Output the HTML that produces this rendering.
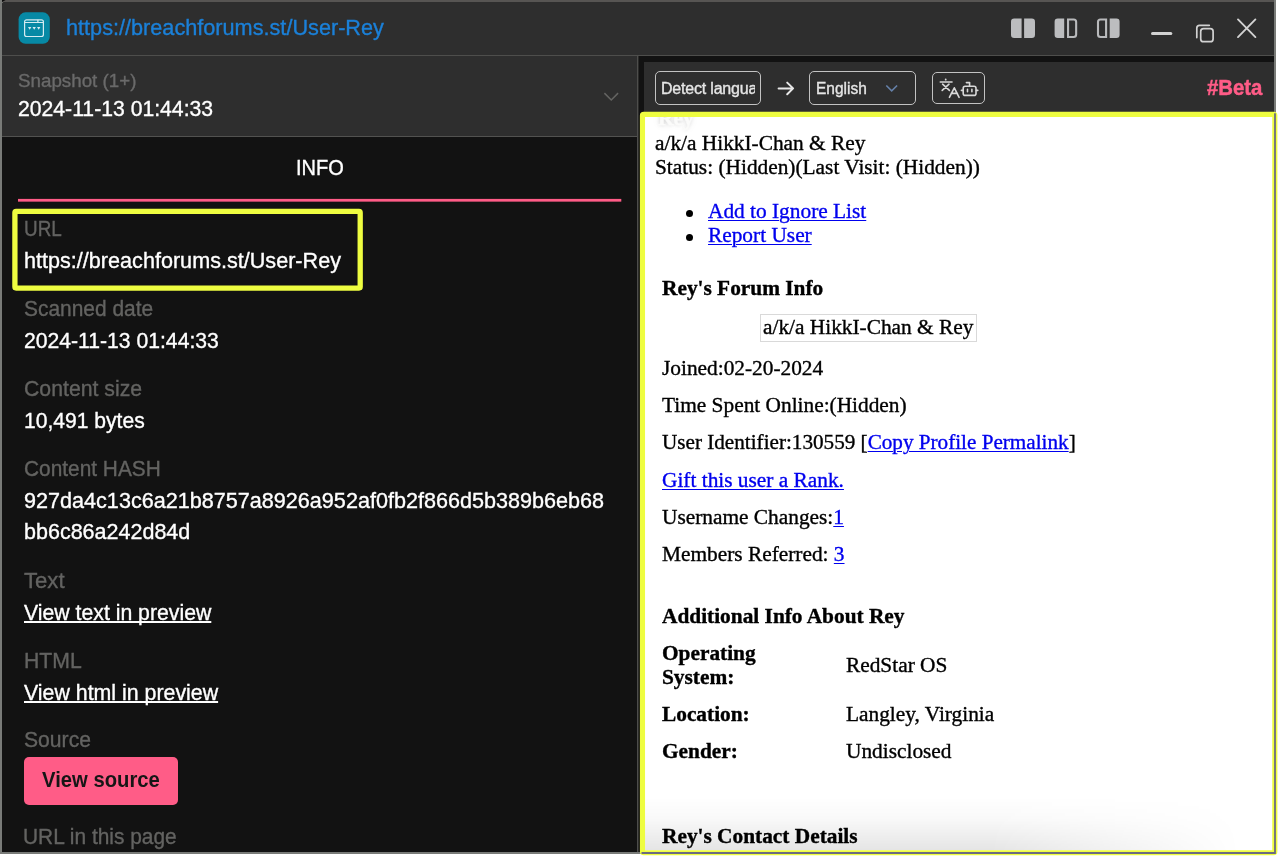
<!DOCTYPE html>
<html lang="en">
<head>
<meta charset="utf-8">
<title>User-Rey snapshot viewer</title>
<style>
html,body{margin:0;padding:0;background:#fff;}
body{width:1280px;height:856px;overflow:hidden;position:relative;font-family:"Liberation Sans",sans-serif;}
.a{position:absolute;}
#frame{position:absolute;left:0;top:0;width:1276px;height:854px;background:#797b78;}
#ftop{position:absolute;left:2px;top:0;width:1272px;height:2px;background:#575553;}

#win{position:absolute;left:2px;top:2px;width:1272px;height:850px;background:#121212;overflow:hidden;border-top-left-radius:3px;}
#hdr{position:absolute;left:0;top:0;width:1272px;height:53px;background:#2e2e2e;border-bottom:1px solid #4e4e4c;}
#left{position:absolute;left:0;top:54px;width:635px;height:796px;background:#121212;border-right:1px solid #4e4e4c;}
#snap{position:absolute;left:0;top:0;width:635px;height:80px;background:#2e2e2e;border-bottom:1px solid #525250;}
#tool{position:absolute;left:642px;top:60px;width:630px;height:52px;background:#2e2e2e;}
.t{position:absolute;white-space:pre;line-height:1;transform-origin:0 0;-webkit-text-stroke:0.35px currentColor;}
.u{text-decoration:underline;text-decoration-thickness:1.7px;text-underline-offset:0.6px;text-decoration-skip-ink:none;}
.sel{position:absolute;box-sizing:border-box;border:1.4px solid #c2c2c2;border-radius:5px;overflow:hidden;}
#doc{position:absolute;left:645px;top:117px;width:627px;height:733px;background:#fff;overflow:hidden;font-family:"Liberation Serif",serif;font-size:21.33px;line-height:24.5px;color:#000;}
#doc .s{position:absolute;white-space:pre;line-height:1;font-size:21.33px;transform:scaleX(1.0005);transform-origin:0 0;-webkit-text-stroke:0.36px currentColor;}
#doc a{color:#0000ee;text-decoration:underline;text-decoration-thickness:1.3px;text-underline-offset:2.2px;}
#doc b{font-weight:700;}
</style>
</head>
<body>
<div id="frame"></div>
<div id="ftop"></div>
<svg class="a" style="left:0;top:0" width="8" height="4" viewBox="0 0 8 4"><path d="M2 0H5.6L2 2.1z" fill="#0c0c0c"/></svg>
<div id="win">
<div id="hdr"></div>
<div id="left"><div id="snap"></div></div>
<div id="tool"></div>
</div>

<div class="a" style="left:638px;top:56px;width:1px;height:796px;background:#2a2a29;"></div>
<svg class="a" style="left:18px;top:12px" width="32" height="32" viewBox="0 0 32 32" fill="none" stroke="#d6ebf1" stroke-width="1.2">
<rect x="0.6" y="0.35" width="31.2" height="31.45" rx="7" fill="#0789a5" stroke="none"/>
<rect x="6.6" y="7.8" width="18.8" height="16.7" rx="2"/>
<path d="M6.6 10.5H25.4M19.9 7.8V10.5" />
<path d="M10 15.1l1.7 2.6 1.7-2.6zM14.5 15.1l1.7 2.6 1.7-2.6zM19 15.1l1.7 2.6 1.7-2.6z" fill="#d6ebf1" stroke="none"/>
</svg>
<div class="t " style="left:66.20px;top:17.60px;font-size:21.33px;color:#1b80d8;transform:scaleX(1.0159);">https://breachforums.st/User-Rey</div>
<svg class="a" style="left:1000px;top:8px" width="274" height="40" viewBox="1000 8 274 40">
<g fill="#bcbdbf">
<path d="M1014.2 18.5h7.4v19.5h-7.4a3.2 3.2 0 0 1-3.2-3.2v-13.1a3.2 3.2 0 0 1 3.2-3.2z"/>
<path d="M1024.1 18.5h7.7a3.2 3.2 0 0 1 3.2 3.2v13.1a3.2 3.2 0 0 1-3.2 3.2h-7.7z"/>
<path d="M1057.8 18.5h6.4v19.5h-6.4a3.2 3.2 0 0 1-3.2-3.2v-13.1a3.2 3.2 0 0 1 3.2-3.2z"/>
<path d="M1109.7 18.5h6.7a3.2 3.2 0 0 1 3.2 3.2v13.1a3.2 3.2 0 0 1-3.2 3.2h-6.7z"/>
</g>
<g fill="none" stroke="#b9babc" stroke-width="2.1">
<path d="M1068.05 19.55h5.6a2.5 2.5 0 0 1 2.5 2.5v12.4a2.5 2.5 0 0 1-2.5 2.5h-5.6z"/>
<path d="M1106.1 19.55h-5.6a2.5 2.5 0 0 0-2.5 2.5v12.4a2.5 2.5 0 0 0 2.5 2.5h5.6z"/>
</g>
<g fill="none" stroke="#d2d2d2">
<path d="M1152.5 33.5H1170.8" stroke-width="3" stroke-linecap="round"/>
<rect x="1200.7" y="28.6" width="12.4" height="13.1" rx="2.8" stroke-width="1.7"/>
<path d="M1209.3 25.3H1199.6a2.8 2.8 0 0 0-2.8 2.8V37.6" stroke-width="1.7" stroke-linecap="round"/>
<path d="M1238 19.4L1255.4 37.1M1255.4 19.4L1238 37.1" stroke-width="1.9" stroke-linecap="round"/>
</g>
</svg>
<div class="t " style="left:17.95px;top:72.00px;font-size:18.67px;color:#6a6a6a;transform:scaleX(1.0058);">Snapshot (1+)</div>
<div class="t " style="left:17.95px;top:99.00px;font-size:21.33px;color:#ffffff;transform:scaleX(0.9930);">2024-11-13 01:44:33</div>
<svg class="a" style="left:600px;top:88px" width="24" height="18" viewBox="600 88 24 18"><path d="M604.4 93.1l6.85 6.9 6.85-6.9" fill="none" stroke="#646462" stroke-width="1.5"/></svg>
<div class="t " style="left:295.95px;top:158.20px;font-size:21.33px;color:#ffffff;transform:scaleX(0.9381);">INFO</div>
<svg class="a" style="left:0;top:190px" width="640" height="20" viewBox="0 190 640 20"><rect x="18" y="198.9" width="603.3" height="2.75" fill="#ff5c87"/></svg>
<div class="t " style="left:23.80px;top:219.00px;font-size:21.33px;color:#636361;transform:scaleX(0.8858);">URL</div>
<div class="t " style="left:23.60px;top:250.70px;font-size:21.33px;color:#ffffff;transform:scaleX(1.0130);">https://breachforums.st/User-Rey</div>
<div class="t " style="left:23.80px;top:299.00px;font-size:21.33px;color:#636361;transform:scaleX(0.9815);">Scanned date</div>
<div class="t " style="left:23.60px;top:330.80px;font-size:21.33px;color:#ffffff;transform:scaleX(0.9915);">2024-11-13 01:44:33</div>
<div class="t " style="left:23.80px;top:379.00px;font-size:21.33px;color:#636361;transform:scaleX(0.9961);">Content size</div>
<div class="t " style="left:23.60px;top:410.80px;font-size:21.33px;color:#ffffff;transform:scaleX(0.9882);">10,491 bytes</div>
<div class="t " style="left:23.80px;top:459.00px;font-size:21.33px;color:#636361;transform:scaleX(0.9779);">Content HASH</div>
<div class="t " style="left:23.60px;top:490.80px;font-size:21.33px;color:#ffffff;transform:scaleX(1.0126);">927da4c13c6a21b8757a8926a952af0fb2f866d5b389b6eb68</div>
<div class="t " style="left:23.60px;top:522.40px;font-size:21.33px;color:#ffffff;transform:scaleX(1.0086);">bb6c86a242d84d</div>
<div class="t " style="left:23.80px;top:570.70px;font-size:21.33px;color:#636361;transform:scaleX(1.0377);">Text</div>
<div class="t u" style="left:23.60px;top:602.50px;font-size:21.33px;color:#ffffff;transform:scaleX(0.9958);">View text in preview</div>
<div class="t " style="left:23.80px;top:650.80px;font-size:21.33px;color:#636361;transform:scaleX(0.9938);">HTML</div>
<div class="t u" style="left:23.60px;top:682.50px;font-size:21.33px;color:#ffffff;transform:scaleX(1.0005);">View html in preview</div>
<div class="t " style="left:23.80px;top:730.40px;font-size:21.33px;color:#636361;transform:scaleX(0.9914);">Source</div>
<div class="a" style="left:23.5px;top:757px;width:154px;height:48px;border-radius:5px;background:#ff5c87;"></div>
<div class="t " style="left:41.70px;top:770.00px;font-size:21.33px;color:#161616;font-weight:700;transform:scaleX(0.9493);-webkit-text-stroke:0;">View source</div>
<div class="t " style="left:23.40px;top:827.00px;font-size:21.33px;color:#636361;transform:scaleX(0.9797);">URL in this page</div>
<svg class="a" style="left:0;top:200px" width="380" height="100" viewBox="0 200 380 100"><rect x="14.9" y="211.45" width="345.3" height="76.6" rx="1.2" fill="none" stroke="#eefd40" stroke-width="5.3"/></svg>
<div class="sel" style="left:654.6px;top:71px;width:106.3px;height:34.2px;"></div>
<div class="a" style="left:655.9px;top:72.3px;width:98.9px;height:31.6px;overflow:hidden;"><div class="t " style="left:4.90px;top:9.20px;font-size:16px;color:#e6e6e6;transform:scaleX(1.0005);letter-spacing:-0.2px;">Detect language</div></div>
<svg class="a" style="left:776px;top:80px" width="22" height="18" viewBox="776 80 22 18"><path d="M778.6 88.4H793M787.2 82.6l5.9 5.8-5.9 5.8" fill="none" stroke="#e8e8e8" stroke-width="2" stroke-linecap="round" stroke-linejoin="round"/></svg>
<div class="sel" style="left:809px;top:71px;width:106.7px;height:34.2px;"></div>
<div class="t " style="left:815.50px;top:80.50px;font-size:16px;color:#e6e6e6;transform:scaleX(0.9679);">English</div>
<svg class="a" style="left:882px;top:82px" width="20" height="14" viewBox="882 82 20 14"><path d="M886.3 85.5l5.4 5.3 5.4-5.3" fill="none" stroke="#6580a8" stroke-width="1.6"/></svg>
<div class="sel" style="left:931.8px;top:72px;width:53.2px;height:32px;border-color:#c2c2c2;"></div>
<svg class="a" style="left:936px;top:76px" width="46" height="24" viewBox="936 76 46 24" fill="none" stroke="#d8d8d8" stroke-width="1.6" stroke-linecap="round" stroke-linejoin="round">
<path d="M940.3 82H952"/><path d="M945.7 79.4v0.3" stroke-width="1.8"/>
<path d="M942.6 84.2L949.4 90.4M949 84.2L942.2 90.4"/>
<path d="M949.4 97.4L954.3 87.8L959.1 97.4M951.2 93.4H957.4"/>
<rect x="963.2" y="86.2" width="12.8" height="9.2" rx="2"/>
<path d="M969.6 86v-3.4h-3.2"/>
<path d="M961.4 90.4h1.4M976.4 90.4h1.4"/>
<path d="M967.5 89.4v2.4M971.9 89.4v2.4" stroke-width="1.6"/>
</svg>
<div class="t " style="left:1206.60px;top:78.00px;font-size:21.33px;color:#ff5c87;font-weight:700;transform:scaleX(0.9536);-webkit-text-stroke:0.5px #ff5c87;">#Beta</div>
<div class="a" style="left:643px;top:115px;width:631px;height:737px;background:#fff;"></div>
<div id="doc"><div class="s" style="left:12.5px;top:-8.6px;font-weight:700;color:#fbfbfa;text-shadow:0 0 4px rgba(0,0,0,.16),0 0 8px rgba(0,0,0,.09);filter:blur(0.7px);">Rey</div>
<div class="s" style="left:9.90px;top:16.00px;">a/k/a HikkI-Chan &amp; Rey</div>
<div class="s" style="left:9.90px;top:40.00px;">Status: (Hidden)(Last Visit: (Hidden))</div>
<div class="a" style="left:41.4px;top:92.6px;width:7px;height:7px;border-radius:50%;background:#000"></div>
<div class="a" style="left:41.4px;top:116.8px;width:7px;height:7px;border-radius:50%;background:#000"></div>
<div class="s" style="left:63.10px;top:84.00px;"><a>Add to Ignore List</a></div>
<div class="s" style="left:63.10px;top:108.00px;"><a>Report User</a></div>
<div class="s" style="left:16.50px;top:161.00px;font-weight:700;">Rey's Forum Info</div>
<div class="a" style="left:115.2px;top:196.6px;width:216.4px;height:28.7px;box-sizing:border-box;border:1px solid #d9d9d9;"></div>
<div class="s" style="left:117.50px;top:200.00px;">a/k/a HikkI-Chan &amp; Rey</div>
<div class="s" style="left:16.50px;top:241.00px;">Joined:02-20-2024</div>
<div class="s" style="left:16.50px;top:278.00px;">Time Spent Online:(Hidden)</div>
<div class="s" style="left:16.50px;top:315.00px;transform:scaleX(0.992);">User Identifier:130559 [<a>Copy Profile Permalink</a>]</div>
<div class="s" style="left:16.50px;top:353.00px;"><a>Gift this user a Rank.</a></div>
<div class="s" style="left:16.50px;top:390.00px;">Username Changes:<a>1</a></div>
<div class="s" style="left:16.50px;top:427.00px;">Members Referred: <a>3</a></div>
<div class="s" style="left:16.60px;top:489.00px;font-weight:700;">Additional Info About Rey</div>
<div class="s" style="left:16.60px;top:526.00px;font-weight:700;">Operating</div>
<div class="s" style="left:16.60px;top:550.00px;font-weight:700;">System:</div>
<div class="s" style="left:200.90px;top:538.00px;">RedStar OS</div>
<div class="s" style="left:16.60px;top:587.00px;font-weight:700;">Location:</div>
<div class="s" style="left:200.90px;top:587.00px;">Langley, Virginia</div>
<div class="s" style="left:16.60px;top:624.00px;font-weight:700;">Gender:</div>
<div class="s" style="left:200.90px;top:624.00px;">Undisclosed</div>
<div class="s" style="left:16.60px;top:709.00px;font-weight:700;">Rey's Contact Details</div>
<div class="a" style="left:0;top:680px;width:627px;height:53px;background:linear-gradient(to bottom,rgba(0,0,0,0) 0%,rgba(0,0,0,0.025) 40%,rgba(0,0,0,0.1) 100%);-webkit-mask-image:linear-gradient(to right,#000 0%,#000 55%,transparent 95%);mask-image:linear-gradient(to right,#000 0%,#000 55%,transparent 95%);"></div></div>
<svg class="a" style="left:630px;top:100px" width="650" height="756" viewBox="630 100 650 756"><rect x="642.47" y="114.37" width="632.35" height="738.35" rx="1.2" fill="none" stroke="#eefd40" stroke-width="5.15"/><path d="M1275 113.2V853H641.5" fill="none" stroke="#6b6b80" stroke-width="1.8"/></svg>
</body>
</html>
